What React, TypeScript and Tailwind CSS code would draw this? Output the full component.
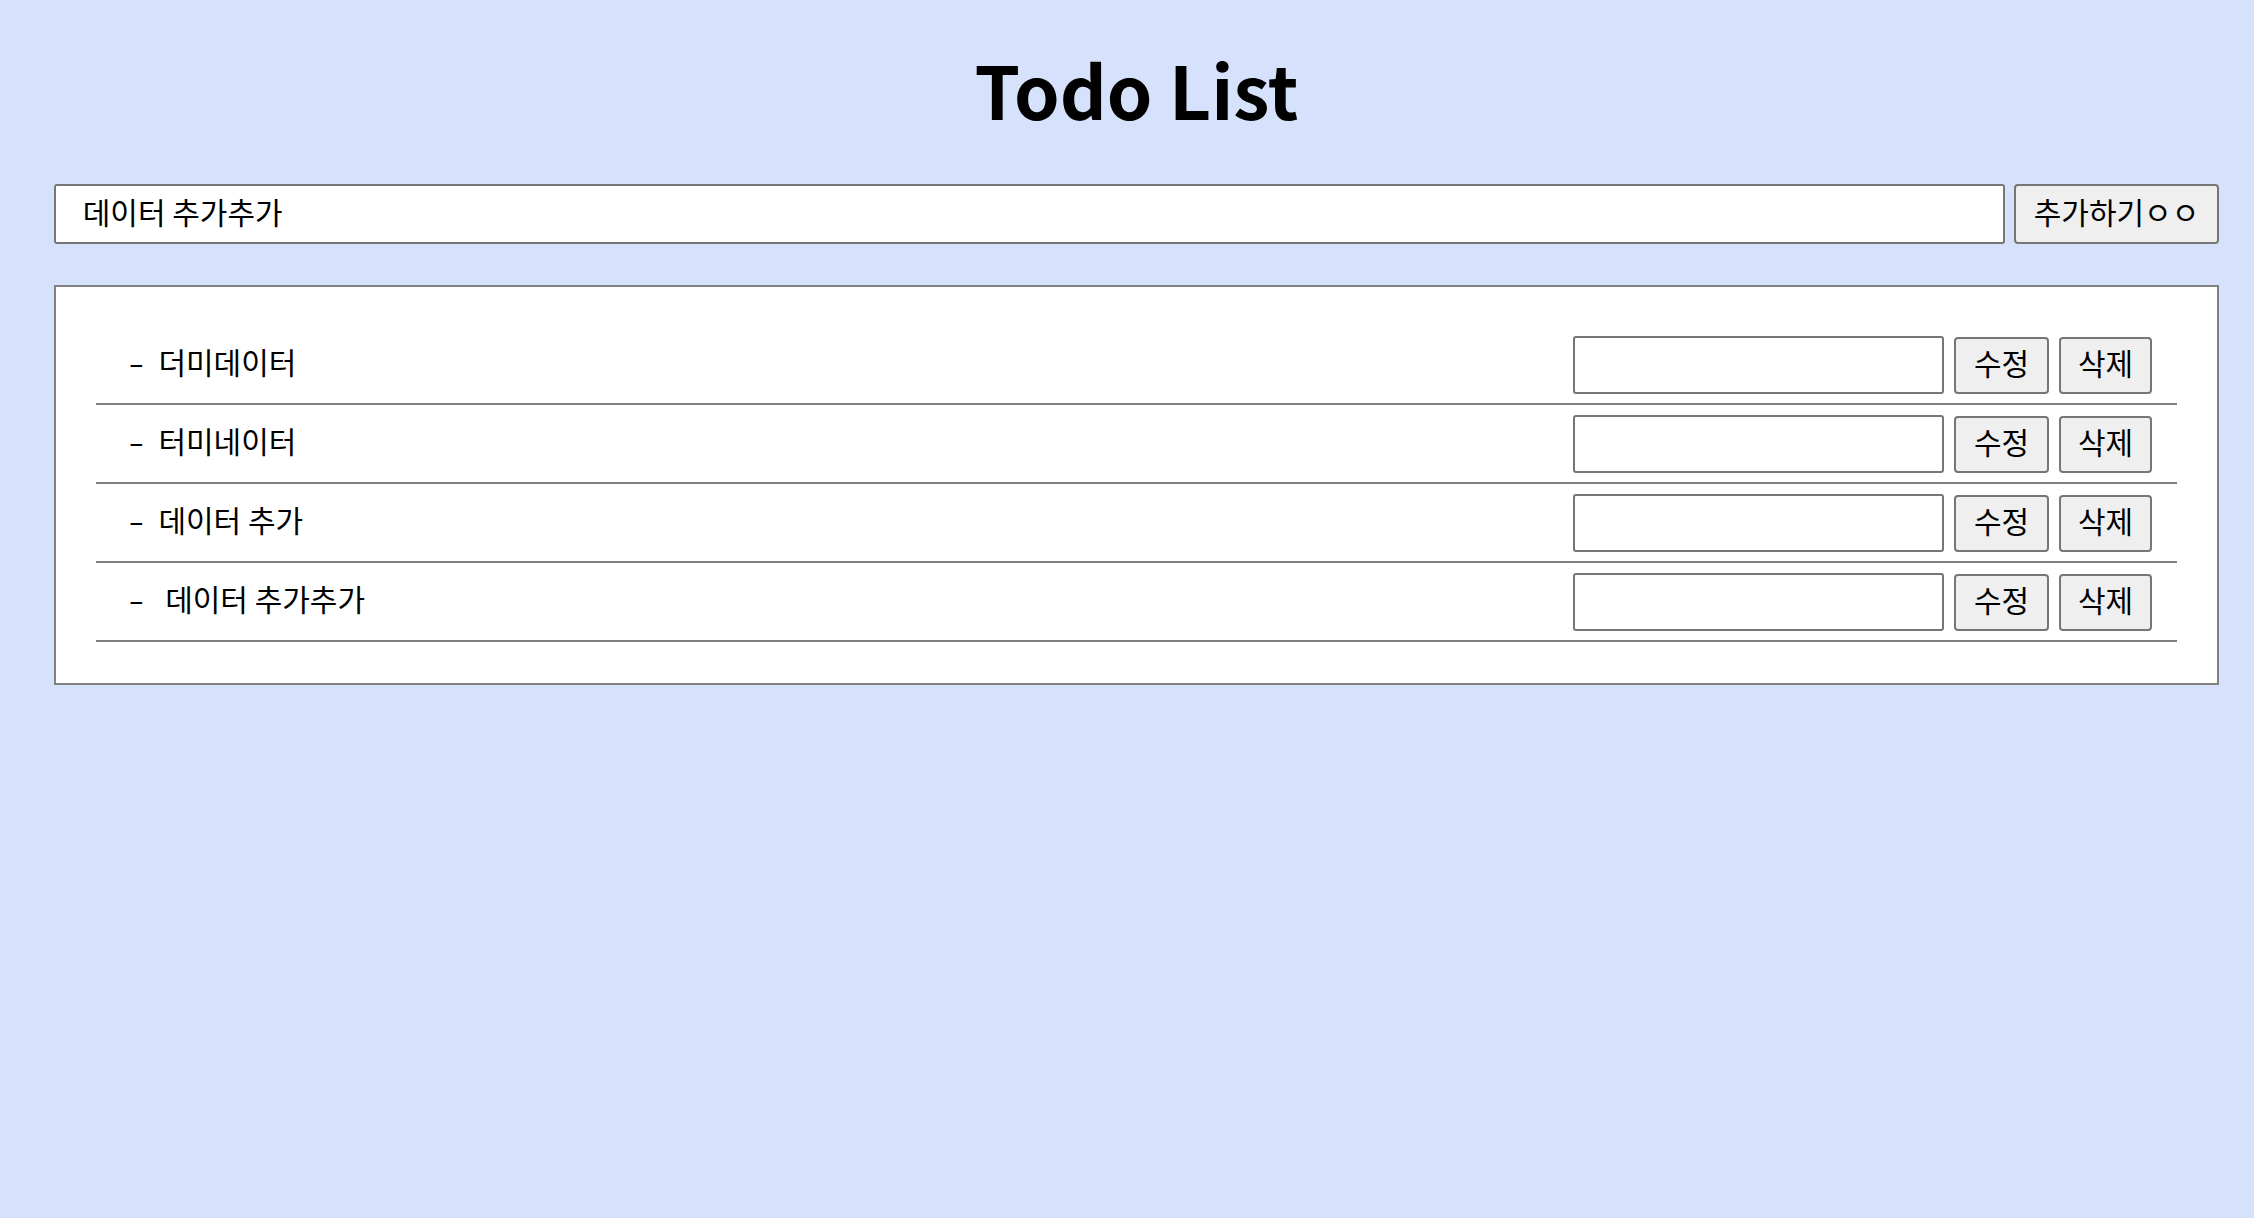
import React, { useState } from "react"

type Todo = { id: number; text: string }

const initial: Todo[] = [
	{ id: 1, text: "더미데이터" },
	{ id: 2, text: "터미네이터" },
	{ id: 3, text: "데이터 추가" },
	{ id: 4, text: " 데이터 추가추가" },
]

const btn =
	"h-[57px] bg-[#efefef] border-2 border-[#767676] rounded-[4px] text-[30px] leading-none pb-[7px] text-black"

const TodoItem = ({ todo }: { todo: Todo }) => {
	const [edit, setEdit] = useState("")
	return (
		<li className="flex items-center pt-[10px] pb-[9px] pl-[33px] pr-[25px] border-b-2 border-[#808080]">
			<span className="flex-1 text-[30px] leading-none pb-[8px] whitespace-pre">
				<span className="inline-block scale-x-150 ml-[2px]">-</span>
				<span className="ml-[17px]">{todo.text}</span>
			</span>
			<input
				value={edit}
				onChange={(e) => setEdit(e.target.value)}
				className="w-[371px] h-[58px] bg-white border-2 border-[#767676] rounded-[3px] px-2 text-[30px] outline-none"
			/>
			<button type="button" className={`${btn} ml-[10px] w-[95px]`}>
				수정
			</button>
			<button type="button" className={`${btn} ml-[10px] w-[93px]`}>
				삭제
			</button>
		</li>
	)
}

export default function App() {
	const [value, setValue] = useState(" 데이터 추가추가")

	return (
		<div className="min-h-screen bg-[#d6e2fc] pl-[54px] pr-[35px] text-black font-['Noto_Sans_CJK_KR',sans-serif]">
			<h1 className="pt-[52px] text-center text-[73px] font-bold leading-none">
				Todo List
			</h1>

			<div className="flex gap-[9px] mt-[59px]">
				<input
					value={value}
					onChange={(e) => setValue(e.target.value)}
					className="flex-1 h-[60px] bg-white border-2 border-[#767676] rounded-[3px] pl-[20px] pb-[7px] text-[30px] outline-none"
				/>
				<button
					type="button"
					className="w-[205px] h-[60px] bg-[#efefef] border-2 border-[#767676] rounded-[4px] text-[30px] leading-none pb-[6px]"
				>
					추가하기ㅇㅇ
				</button>
			</div>

			<div className="mt-[41px] bg-white border-2 border-[#808080] px-[40px] pt-[39px] pb-[41px]">
				<ul>
					{initial.map((todo) => (
						<TodoItem key={todo.id} todo={todo} />
					))}
				</ul>
			</div>
		</div>
	)
}
